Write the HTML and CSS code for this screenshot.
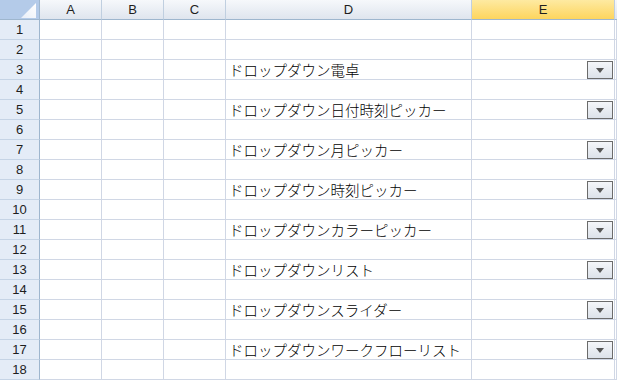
FILE: index.html
```html
<!DOCTYPE html>
<html lang="ja">
<head>
<meta charset="utf-8">
<title>Sheet</title>
<link rel="stylesheet" href="styles.css">
</head>
<body>
<table class="sheet">
  <colgroup>
    <col class="c-rh"><col class="c-a"><col class="c-b"><col class="c-c"><col class="c-d"><col class="c-e"><col class="c-f">
  </colgroup>
  <thead>
    <tr>
      <th class="corner"><svg class="corner-tri" width="15" height="15" viewBox="0 0 15 15"><defs><linearGradient id="tg" x1="0" y1="1" x2="1" y2="0"><stop offset="0" stop-color="#e9eff8"/><stop offset="1" stop-color="#ffffff"/></linearGradient></defs><polygon points="0,15 15,15 15,0" fill="url(#tg)"/></svg></th>
      <th class="colh">A</th>
      <th class="colh">B</th>
      <th class="colh">C</th>
      <th class="colh">D</th>
      <th class="colh sel">E</th>
      <th class="colh fill"></th>
    </tr>
  </thead>
  <tbody>
    <tr><th class="rowh">1</th><td></td><td></td><td></td><td></td><td></td><td></td></tr>
    <tr><th class="rowh">2</th><td></td><td></td><td></td><td></td><td></td><td></td></tr>
    <tr><th class="rowh">3</th><td></td><td></td><td></td><td class="txt">ドロップダウン電卓</td><td><div class="dd"><span class="btn"><span class="arr"></span></span></div></td><td></td></tr>
    <tr><th class="rowh">4</th><td></td><td></td><td></td><td></td><td></td><td></td></tr>
    <tr><th class="rowh">5</th><td></td><td></td><td></td><td class="txt">ドロップダウン日付時刻ピッカー</td><td><div class="dd"><span class="btn"><span class="arr"></span></span></div></td><td></td></tr>
    <tr><th class="rowh">6</th><td></td><td></td><td></td><td></td><td></td><td></td></tr>
    <tr><th class="rowh">7</th><td></td><td></td><td></td><td class="txt">ドロップダウン月ピッカー</td><td><div class="dd"><span class="btn"><span class="arr"></span></span></div></td><td></td></tr>
    <tr><th class="rowh">8</th><td></td><td></td><td></td><td></td><td></td><td></td></tr>
    <tr><th class="rowh">9</th><td></td><td></td><td></td><td class="txt">ドロップダウン時刻ピッカー</td><td><div class="dd"><span class="btn"><span class="arr"></span></span></div></td><td></td></tr>
    <tr><th class="rowh">10</th><td></td><td></td><td></td><td></td><td></td><td></td></tr>
    <tr><th class="rowh">11</th><td></td><td></td><td></td><td class="txt">ドロップダウンカラーピッカー</td><td><div class="dd"><span class="btn"><span class="arr"></span></span></div></td><td></td></tr>
    <tr><th class="rowh">12</th><td></td><td></td><td></td><td></td><td></td><td></td></tr>
    <tr><th class="rowh">13</th><td></td><td></td><td></td><td class="txt">ドロップダウンリスト</td><td><div class="dd"><span class="btn"><span class="arr"></span></span></div></td><td></td></tr>
    <tr><th class="rowh">14</th><td></td><td></td><td></td><td></td><td></td><td></td></tr>
    <tr><th class="rowh">15</th><td></td><td></td><td></td><td class="txt">ドロップダウンスライダー</td><td><div class="dd"><span class="btn"><span class="arr"></span></span></div></td><td></td></tr>
    <tr><th class="rowh">16</th><td></td><td></td><td></td><td></td><td></td><td></td></tr>
    <tr><th class="rowh">17</th><td></td><td></td><td></td><td class="txt">ドロップダウンワークフローリスト</td><td><div class="dd"><span class="btn"><span class="arr"></span></span></div></td><td></td></tr>
    <tr><th class="rowh">18</th><td></td><td></td><td></td><td></td><td></td><td></td></tr>
  </tbody>
</table>
</body>
</html>
```
FILE: styles.css
```css
html, body {
  margin: 0;
  padding: 0;
  background: #ffffff;
  overflow: hidden;
}

.sheet {
  table-layout: fixed;
  border-collapse: separate;
  border-spacing: 0;
  width: 617px;
  font-family: "Liberation Sans", Arial, sans-serif;
  font-size: 13px;
  color: #1e1e1e;
}

.c-rh { width: 40px; }
.c-a, .c-b, .c-c { width: 62px; }
.c-d { width: 246px; }
.c-e { width: 143px; }
.c-f { width: 2px; }

.sheet th,
.sheet td {
  box-sizing: border-box;
  height: 20px;
  padding: 0;
  border-right: 1px solid #d0d7e5;
  border-bottom: 1px solid #d0d7e5;
  white-space: nowrap;
  overflow: visible;
}

.sheet thead th {
  height: 20px;
  font-weight: normal;
  text-align: center;
  border-bottom: 1px solid #9eb6ce;
  border-right: 1px solid #c0cfe0;
  background: linear-gradient(#f6f8fb, #dfe5ee);
}

.sheet thead th.corner {
  position: relative;
  background: #b4cbe9;
  border-right: 1px solid #9eb6ce;
  text-align: right;
  vertical-align: bottom;
  line-height: 0;
}

.corner-tri {
  display: inline-block;
  margin: 0 3px 1px 0;
}

.sheet thead th.sel {
  background: linear-gradient(#feeaa1, #fdd55e);
  border-right: 1px solid #c0cfe0;
}

.sheet thead th.fill {
  border-right: none;
}

.sheet th.rowh {
  font-weight: normal;
  text-align: center;
  background: #e4ecf7;
  border-right: 1px solid #9eb6ce;
  border-bottom: 1px solid #c5d4e6;
}

.sheet td.txt {
  padding-left: 3px;
  font-family: "Noto Sans CJK JP", "Noto Sans", sans-serif;
  font-size: 14.5px;
  font-weight: 300;
  line-height: 19px;
  color: #000000;
}

.dd {
  display: flex;
  justify-content: flex-end;
  padding-right: 1px;
}

.btn {
  box-sizing: border-box;
  width: 26px;
  height: 18px;
  border: 1px solid #6b6b6b;
  background: linear-gradient(#f4f6f9, #dce2ea);
  display: flex;
  align-items: center;
  justify-content: center;
}

.arr {
  width: 0;
  height: 0;
  border-left: 4px solid transparent;
  border-right: 4px solid transparent;
  border-top: 5px solid #555555;
  margin-top: 1px;
}
```
